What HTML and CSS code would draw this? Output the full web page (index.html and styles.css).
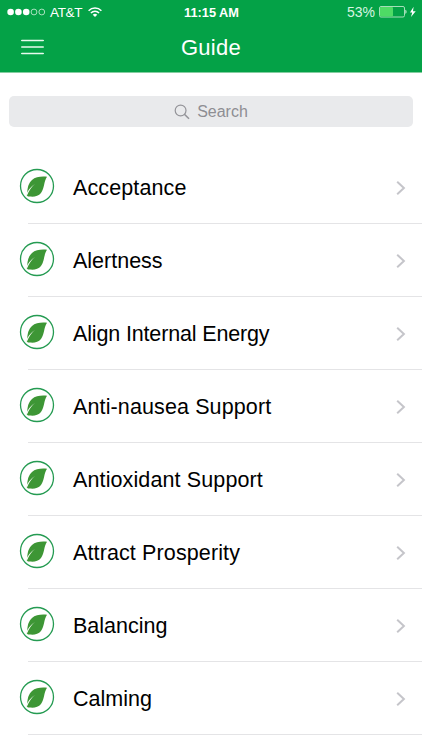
FILE: index.html
```html
<!DOCTYPE html>
<html lang="en">
<head>
    <meta charset="UTF-8">
    <meta name="viewport" content="width=device-width, initial-scale=1.0">
    <title>Guide</title>
    <link rel="stylesheet" href="styles.css">
</head>
<body>
    <svg class="sprite" aria-hidden="true">
        <symbol id="leaf" viewBox="0 0 36 36">
            <circle cx="18" cy="18" r="16.5" fill="#fff" stroke="#259b52" stroke-width="1.3"/>
            <path fill="#3d9635" d="M28 8.8C22.5 8.2 16.5 8.8 13 12C9.6 15.2 8.6 19 8.2 24.4C7.9 25.6 7.8 26.5 7.8 27.4C8.3 28.2 9.5 28.6 11 28.6C15.5 29 19.5 28.2 22 25C25.6 20.2 24.6 13.8 28 8.8Z"/>
            <path fill="#fff" d="M7.2 26.6C9.2 22 12 18.4 16 16C12.8 18.6 10.2 22 8 27.4Z"/>
        </symbol>
        <symbol id="chevron" viewBox="0 0 10 16">
            <path d="M1.2 1.7L7.9 8L1.2 14.3" fill="none" stroke="#c5c5ca" stroke-width="2"/>
        </symbol>
    </svg>

    <header>
        <div class="status">
            <div class="carrier">
                <svg class="signal" viewBox="0 0 38 8">
                    <g fill="#fff">
                        <circle cx="3.6" cy="4" r="3.3"/>
                        <circle cx="11.4" cy="4" r="3.3"/>
                        <circle cx="19.2" cy="4" r="3.3"/>
                    </g>
                    <g fill="none" stroke="#d0f0dc" stroke-width="0.8">
                        <circle cx="27" cy="4" r="2.9"/>
                        <circle cx="34.8" cy="4" r="2.9"/>
                    </g>
                </svg>
                <span class="network">AT&amp;T</span>
                <svg class="wifi" viewBox="0 0 14 10">
                    <g fill="none" stroke="#fff" stroke-width="1.5">
                        <path d="M0.6 3.7C4.2 0.1 9.8 0.1 13.4 3.7"/>
                        <path d="M2.9 6C5.2 3.7 8.8 3.7 11.1 6"/>
                    </g>
                    <path fill="#fff" d="M4.7 7.7C6 6.4 8 6.4 9.3 7.7L7 10Z"/>
                </svg>
            </div>
            <span class="time">11:15 AM</span>
            <div class="power">
                <span class="percent">53%</span>
                <svg class="battery" viewBox="0 0 37 12">
                    <rect x="0.5" y="0.5" width="25" height="10.5" rx="1.5" fill="none" stroke="#a5dfb9" stroke-width="1"/>
                    <rect x="1" y="1" width="13" height="9.5" rx="1" fill="#4edb65"/>
                    <path fill="#d5f3de" d="M26.4 3.8C27.9 4.2 27.9 7.4 26.4 7.8Z"/>
                    <path fill="#fff" d="M34.6 0.8L31 6.4H33.2L32 11L36.7 5.2H34Z"/>
                </svg>
            </div>
        </div>
        <div class="navbar">
            <button class="menu" aria-label="Menu">
                <svg viewBox="0 0 23 16">
                    <path d="M0.8 1.5H22.2M0.8 8H22.2M0.8 14.5H22.2" stroke="#e8faee" stroke-width="1.7" stroke-linecap="round"/>
                </svg>
            </button>
            <h1>Guide</h1>
        </div>
    </header>

    <div class="search">
        <svg viewBox="0 0 16 16">
            <circle cx="6.6" cy="6.5" r="5.4" fill="none" stroke="#949499" stroke-width="1.2"/>
            <path d="M10.4 10.3L15 14.8" stroke="#949499" stroke-width="1.6"/>
        </svg>
        <span>Search</span>
    </div>

    <ul class="list">
        <li><svg class="leaf"><use href="#leaf"/></svg><div class="row"><span class="wide">Acceptance</span><svg class="chevron"><use href="#chevron"/></svg></div></li>
        <li><svg class="leaf"><use href="#leaf"/></svg><div class="row"><span>Alertness</span><svg class="chevron"><use href="#chevron"/></svg></div></li>
        <li><svg class="leaf"><use href="#leaf"/></svg><div class="row"><span class="tight">Align Internal Energy</span><svg class="chevron"><use href="#chevron"/></svg></div></li>
        <li><svg class="leaf"><use href="#leaf"/></svg><div class="row"><span class="wide">Anti-nausea Support</span><svg class="chevron"><use href="#chevron"/></svg></div></li>
        <li><svg class="leaf"><use href="#leaf"/></svg><div class="row"><span class="wide">Antioxidant Support</span><svg class="chevron"><use href="#chevron"/></svg></div></li>
        <li><svg class="leaf"><use href="#leaf"/></svg><div class="row"><span class="wide">Attract Prosperity</span><svg class="chevron"><use href="#chevron"/></svg></div></li>
        <li><svg class="leaf"><use href="#leaf"/></svg><div class="row"><span>Balancing</span><svg class="chevron"><use href="#chevron"/></svg></div></li>
        <li><svg class="leaf"><use href="#leaf"/></svg><div class="row"><span>Calming</span><svg class="chevron"><use href="#chevron"/></svg></div></li>
    </ul>
</body>
</html>
```

FILE: styles.css
```css
* {
    margin: 0;
    padding: 0;
    box-sizing: border-box;
}
body {
    font-family: "Liberation Sans", Arial, sans-serif;
    background: #fff;
    color: #000;
    height: 750px;
    overflow: hidden;
}
svg {
    display: block;
    flex: none;
}
.sprite {
    display: none;
}
header {
    height: 73px;
    background: #04a247;
    border-bottom: 1px solid #84cda0;
    color: #fff;
}

/* status bar */
.status {
    display: grid;
    grid-template-columns: 1fr auto 1fr;
    align-items: center;
    height: 24px;
    padding: 0 6px 0 7px;
}
.carrier, .power {
    display: flex;
    align-items: center;
}
.power {
    justify-content: flex-end;
}
.signal {
    width: 38px;
    height: 8px;
}
.network {
    margin-left: 5px;
    font-size: 13.5px;
    letter-spacing: -0.35px;
}
.wifi {
    width: 14px;
    height: 10px;
    margin-left: 6px;
}
.time {
    font-size: 12.8px;
    font-weight: bold;
}
.percent {
    font-size: 14px;
    color: #d8f5e1;
}
.battery {
    width: 37px;
    height: 12px;
    margin-left: 4px;
}

/* title bar */
.navbar {
    display: grid;
    grid-template-columns: 60px 1fr 60px;
    align-items: center;
    height: 48px;
}
.menu {
    width: 23px;
    margin-left: 21px;
    margin-top: -2px;
    background: none;
    border: none;
}
.menu svg {
    width: 23px;
    height: 16px;
}
h1 {
    font-size: 22px;
    font-weight: normal;
    letter-spacing: 0.3px;
    text-align: center;
}

/* search */
.search {
    display: flex;
    align-items: center;
    justify-content: center;
    height: 31px;
    margin: 23px 9px 0;
    background: #e9eaec;
    border-radius: 5px;
    color: #8e8e93;
    font-size: 16px;
}
.search svg {
    width: 16px;
    height: 16px;
    margin-right: 7px;
}

/* list */
.list {
    margin-top: 24px;
    list-style: none;
}
.list li {
    position: relative;
    height: 73px;
    padding-left: 28px;
}
.leaf {
    position: absolute;
    left: 19px;
    top: 17px;
    width: 36px;
    height: 36px;
}
.row {
    display: flex;
    align-items: center;
    justify-content: space-between;
    height: 73px;
    padding: 1px 16px 0 45px;
    border-bottom: 1px solid #e4e4e6;
    font-size: 21.5px;
}
.row span {
    padding-top: 1px;
}
.row .wide {
    letter-spacing: 0.12px;
}
.row .tight {
    letter-spacing: -0.15px;
}
.chevron {
    width: 10px;
    height: 16px;
}
```
